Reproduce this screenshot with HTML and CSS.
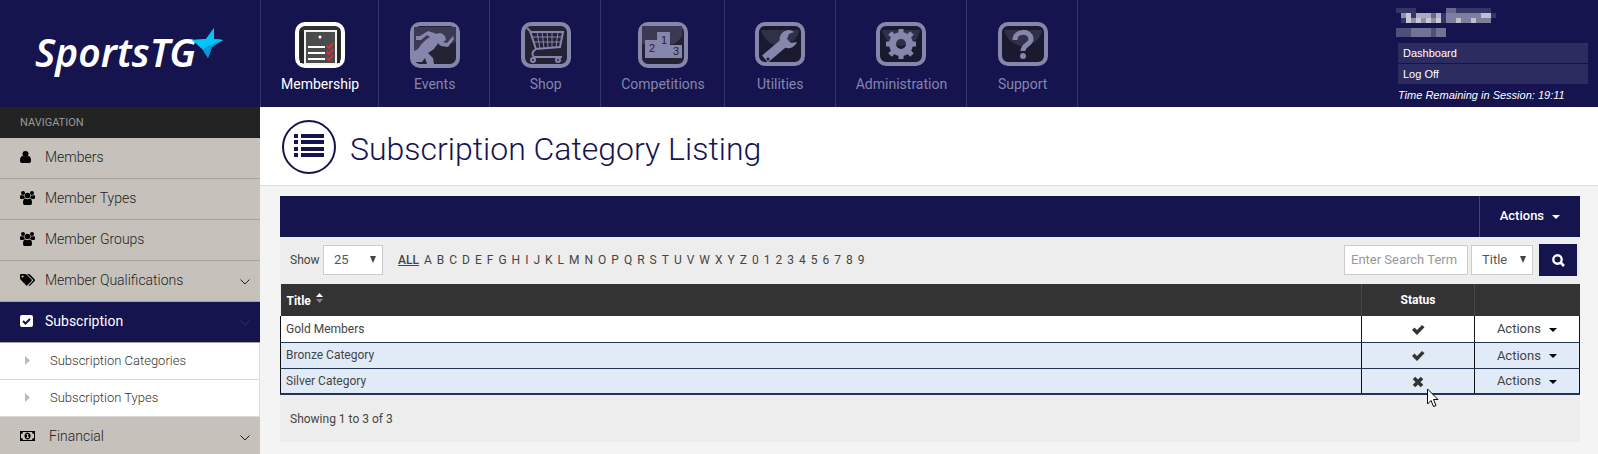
FILE: index.html
```
<!DOCTYPE html>
<html lang="en">
<head>
  <meta charset="UTF-8">
  <meta name="viewport" content="width=device-width, initial-scale=1.0">
  <title>Subscription Category Listing</title>
  <link rel="stylesheet" href="styles.css">
</head>

<body>
  <!-- shared icons -->
  <svg class="sprite" width="0" height="0">
    <symbol id="users" viewBox="0 0 15 14">
      <circle cx="3" cy="2" r="2"/><circle cx="12" cy="2" r="2"/><circle cx="7.500" cy="4.500" r="2.800"/>
      <path d="M0 7V5.500Q0 4 1.200 4Q3 5 4 4.300Q4 6 5 7Q4 7 3.300 8H1Q0 8 0 7ZM15 7V5.500Q15 4 13.800 4Q12 5 11 4.300Q11 6 10 7Q11 7 11.700 8H14Q15 8 15 7ZM3 12Q3 7.500 5.200 7.500Q7.500 9 9.800 7.500Q12 7.500 12 12Q12 14 10.500 14H4.500Q3 14 3 12Z"/>
    </symbol>
    <symbol id="chevron" viewBox="0 0 10 6">
      <path d="M0.500 0.500L5 5L9.500 0.500" fill="none" stroke="currentColor"/>
    </symbol>
    <symbol id="caret" viewBox="0 0 8 4"><path d="M0 0H8L4 4Z"/></symbol>
    <symbol id="tick" viewBox="0 0 14 12"><path d="M1 6L3.500 3.500L6 6L11 1L13.500 3.300L6 11Z"/></symbol>
    <symbol id="cross" viewBox="0 0 12 12">
      <path d="M2 2L10 10M10 2L2 10" stroke="currentColor" stroke-width="3.600"/>
    </symbol>
    <symbol id="frame" viewBox="0 0 50 46">
      <rect x="2" y="2" width="46" height="42" rx="8" fill="#242235" stroke="currentColor" stroke-width="4"/>
    </symbol>
  </svg>

  <header class="header">
    <a class="logo" href="#">
      <span>SportsTG</span>
      <svg class="star" width="31" height="31" viewBox="0 0 31 31">
        <path d="M0 12L14 11L22 0L22 11L31 12L20 19L16 30L11 22Z" fill="#00b9f2"/>
        <path d="M11 22L22 11L31 12L20 19L16 30Z" fill="#0099d6"/>
        <path d="M0 12L14 11L22 0L22 11L31 12L19 17L10 20Z" fill="#00c5f7"/>
      </svg>
    </a>
    <nav class="main-nav">
      <a class="active" href="#">
        <svg width="50" height="46" viewBox="0 0 50 46">
          <rect x="2" y="2" width="46" height="42" rx="8" fill="#333" stroke="#fff" stroke-width="4"/>
          <path d="M10 9H41V42H10Z" fill="#4b4b4b" stroke="#f2f2f2" stroke-width="2"/>
          <path d="M5 6L9 10V41H5ZM45 6L42 10V41H45Z" fill="#262626"/>
          <circle cx="25" cy="15" r="1.500" fill="#fff"/>
          <path d="M13 25H30M13 31H30M13 37H30" stroke="#fff" stroke-width="2"/>
          <path d="M32 24L34 26L38 21M32 30L34 32L38 27M32 36L34 38L38 33" stroke="#d6303f" stroke-width="2" fill="none"/>
        </svg>
        <span>Membership</span>
      </a>
      <a href="#">
        <svg width="50" height="46" viewBox="0 0 50 46">
          <use href="#frame"/>
          <path d="M4 5H46V20Q34 25 20 23L4 30Z" fill="#3b3954"/>
          <path d="M4 29L8 27Q13 19 20 15L17 13L11 18H6V14H10L18 9L27 12Q31 9 35 14L36 18L33 20L37 21L43 14L44 17L38 25L31 24L28 21L24 27L18 31L23 36L24 42H17L15 36L12 40H4Z" fill="currentColor"/>
        </svg>
        <span>Events</span>
      </a>
      <a href="#">
        <svg width="50" height="46" viewBox="0 0 50 46">
          <use href="#frame"/>
          <g fill="none" stroke="currentColor">
            <path d="M6 6L9 9L15 27L39 25L42 10H9" stroke-width="2"/>
            <path d="M15 27Q9 31 13 35H41" stroke-width="2"/>
            <path d="M11 15H41M13 20H40M16 10L19 27M21 10L23 26M26 10L27 26M31 10V26M37 10L35 25"/>
            <circle cx="12" cy="38" r="2" stroke-width="2"/>
            <circle cx="37" cy="38" r="2" stroke-width="2"/>
          </g>
        </svg>
        <span>Shop</span>
      </a>
      <a href="#">
        <svg width="50" height="46" viewBox="0 0 50 46">
          <use href="#frame"/>
          <path d="M4 4H44V14Q40 20 36 22H4Z" fill="#3b3954"/>
          <path d="M7 18H19V10H32V23H44V36H7Z" fill="currentColor"/>
          <g class="podium"><text x="11" y="30">2</text><text x="23" y="22">1</text><text x="35" y="33">3</text></g>
        </svg>
        <span>Competitions</span>
      </a>
      <a href="#">
        <svg width="50" height="44" viewBox="0 0 50 44">
          <rect x="2" y="2" width="46" height="40" rx="8" fill="#19192f" stroke="currentColor" stroke-width="4"/>
          <path d="M6 8H44Q42 22 24 24Q10 22 6 8Z" fill="#303048"/>
          <path d="M10 37L30 20" stroke="currentColor" stroke-width="9"/>
          <path d="M39 10A9 9 0 1 0 42 20L36 21L32 17L34 12Z" fill="currentColor"/>
          <circle cx="13" cy="37" r="1.500" fill="#19192f"/>
        </svg>
        <span>Utilities</span>
      </a>
      <a href="#">
        <svg width="50" height="44" viewBox="0 0 50 44">
          <rect x="2" y="2" width="46" height="40" rx="8" fill="#19192f" stroke="currentColor" stroke-width="4"/>
          <path d="M6 8H44Q42 22 24 24Q10 22 6 8Z" fill="#303048"/>
          <circle cx="25" cy="22" r="8.500" fill="none" stroke="currentColor" stroke-width="7"/>
          <path d="M25 7V12M25 32V37M10 22H15M35 22H40M14 11L18 15M32 29L36 33M36 11L32 15M18 29L14 33" stroke="currentColor" stroke-width="5"/>
        </svg>
        <span>Administration</span>
      </a>
      <a href="#">
        <svg width="50" height="44" viewBox="0 0 50 44">
          <rect x="2" y="2" width="46" height="40" rx="8" fill="#19192f" stroke="currentColor" stroke-width="4"/>
          <path d="M6 8H44Q42 22 24 24Q10 22 6 8Z" fill="#303048"/>
          <path d="M17 18C17 8 33 8 33 17C33 23 25 22 25 29" fill="none" stroke="currentColor" stroke-width="5"/>
          <circle cx="25" cy="34" r="3" fill="currentColor"/>
        </svg>
        <span>Support</span>
      </a>
    </nav>
    <div class="user">
      <svg class="user-name" width="100" height="30" viewBox="0 0 100 30" fill="#fff" shape-rendering="crispEdges">
        <path opacity=".14" d="M0 0H20V5H0ZM50 0H95V5H50ZM5 5H50V15H5ZM95 5H100V10H95Z"/>
        <path opacity=".25" d="M0 20H50V29H0ZM50 0H60V5H50ZM20 5H45V10H20Z"/>
        <path opacity=".2" d="M15 20H35V29H15ZM40 20H50V29H40Z"/>
        <path opacity=".45" d="M5 5H15V10H5ZM50 5H95V15H50ZM10 10H45V15H10ZM20 5H35V10H20Z"/>
        <path opacity=".5" d="M10 5H15V15H10ZM40 5H45V15H40ZM20 10H25V15H20ZM75 10H80V15H75ZM30 10H35V15H30ZM60 10H65V15H60ZM85 5H95V10H85Z"/>
      </svg>
      <a href="#">Dashboard</a>
      <a href="#">Log Off</a>
      <p>Time Remaining in Session: 19:11</p>
    </div>
  </header>

  <div class="wrapper">
    <aside class="sidebar">
      <h2>NAVIGATION</h2>
      <ul class="menu">
        <li><a href="#">
          <svg width="11" height="12" viewBox="0 0 11 12"><circle cx="5.500" cy="3" r="3"/><path d="M0 10Q0 5 3 5Q5.500 7 8 5Q11 5 11 10Q11 12 9 12H2Q0 12 0 10Z"/></svg>
          <span>Members</span>
        </a></li>
        <li><a href="#"><svg width="15" height="14"><use href="#users"/></svg><span>Member Types</span></a></li>
        <li><a href="#"><svg width="15" height="14"><use href="#users"/></svg><span>Member Groups</span></a></li>
        <li><a href="#">
          <svg width="15" height="12" viewBox="0 0 15 12"><path fill-rule="evenodd" d="M0 1Q0 0 1 0H5Q6 0 7 1L11.500 5.500Q12.300 6.300 11.500 7L7.500 11.300Q6.700 12 6 11.300L1 6Q0 5.500 0 4ZM2.500 1.500A1 1 0 1 0 2.600 1.500ZM7 0H8.500Q9.500 0 10 0.500L14.600 5.200Q15.300 6.200 14.600 7L10 11.700Q9.300 12.200 8.700 11.500L13 6.800Q13.500 6.300 13 5.700Z"/></svg>
          <span>Member Qualifications</span>
          <svg class="chevron" width="10" height="6"><use href="#chevron"/></svg>
        </a></li>
        <li class="active"><a href="#">
          <svg width="13" height="12" viewBox="0 0 13 12"><rect width="13" height="12" rx="2"/><path d="M3 6L5.500 8.500L10 4" stroke="#15144f" stroke-width="2" fill="none"/></svg>
          <span>Subscription</span>
          <svg class="chevron" width="10" height="6"><use href="#chevron"/></svg>
        </a>
          <ul class="submenu">
            <li><a href="#"><svg width="5" height="9" viewBox="0 0 5 9"><path d="M0 0L5 4.500L0 9Z"/></svg>Subscription Categories</a></li>
            <li><a href="#"><svg width="5" height="9" viewBox="0 0 5 9"><path d="M0 0L5 4.500L0 9Z"/></svg>Subscription Types</a></li>
          </ul>
        </li>
        <li class="wide"><a href="#">
          <svg width="15" height="10" viewBox="0 0 15 10"><path fill-rule="evenodd" d="M0 0H15V10H0ZM3 1Q3 3 1 3V7Q3 7 3 9H12Q12 7 14 7V3Q12 3 12 1Z"/><path fill-rule="evenodd" d="M7.500 1.500A3 3.500 0 1 0 7.600 1.500ZM6.500 3H8.200V6H9V7H6.500V6H7V4H6.500Z"/></svg>
          <span>Financial</span>
          <svg class="chevron" width="10" height="6"><use href="#chevron"/></svg>
        </a></li>
      </ul>
    </aside>

    <main class="content">
      <div class="page-title">
        <svg width="56" height="56" viewBox="0 0 56 56">
          <circle cx="28" cy="28" r="26" fill="none" stroke="#15144f" stroke-width="2"/>
          <path d="M13 17H17M20 17H43M13 23H17M20 23H43M13 30H17M20 30H43M13 36H17M20 36H43" stroke="#15144f" stroke-width="4"/>
        </svg>
        <h1>Subscription Category Listing</h1>
      </div>

      <section class="panel">
        <div class="toolbar">
          <button type="button">Actions <svg width="8" height="4"><use href="#caret"/></svg></button>
        </div>
        <form class="filters">
          <label for="show">Show</label>
          <select id="show" class="show"><option>25</option><option>50</option></select>
          <div class="letters">
            <a class="all" href="#">ALL</a>
            <a href="#">A</a> <a href="#">B</a> <a href="#">C</a> <a href="#">D</a> <a href="#">E</a> <a href="#">F</a>
            <a href="#">G</a> <a href="#">H</a> <a href="#">I</a> <a href="#">J</a> <a href="#">K</a> <a href="#">L</a>
            <a href="#">M</a> <a href="#">N</a> <a href="#">O</a> <a href="#">P</a> <a href="#">Q</a> <a href="#">R</a>
            <a href="#">S</a> <a href="#">T</a> <a href="#">U</a> <a href="#">V</a> <a href="#">W</a> <a href="#">X</a>
            <a href="#">Y</a> <a href="#">Z</a> <a href="#">0</a> <a href="#">1</a> <a href="#">2</a> <a href="#">3</a>
            <a href="#">4</a> <a href="#">5</a> <a href="#">6</a> <a href="#">7</a> <a href="#">8</a> <a href="#">9</a>
          </div>
          <input type="text" placeholder="Enter Search Term" aria-label="Search term">
          <select class="field" aria-label="Search field"><option>Title</option></select>
          <button class="search-btn" type="button" aria-label="Search">
            <svg width="13" height="13" viewBox="0 0 13 13"><circle cx="5.500" cy="5.500" r="4.200" fill="none" stroke="#fff" stroke-width="2.400"/><path d="M8.500 8.500L12 12" stroke="#fff" stroke-width="2.600"/></svg>
          </button>
        </form>
        <table class="listing">
          <thead>
            <tr>
              <th>Title <svg width="7" height="10" viewBox="0 0 7 10"><path d="M0 4L3.500 0L7 4Z" fill="#fff"/><path d="M0 6H7L3.500 10Z" fill="#888"/></svg></th>
              <th class="status">Status</th>
              <th class="actions"></th>
            </tr>
          </thead>
          <tbody>
            <tr>
              <td>Gold Members</td>
              <td class="status"><svg width="14" height="12"><use href="#tick"/></svg></td>
              <td class="actions"><button type="button">Actions <svg width="8" height="4"><use href="#caret"/></svg></button></td>
            </tr>
            <tr>
              <td>Bronze Category</td>
              <td class="status"><svg width="14" height="12"><use href="#tick"/></svg></td>
              <td class="actions"><button type="button">Actions <svg width="8" height="4"><use href="#caret"/></svg></button></td>
            </tr>
            <tr>
              <td>Silver Category</td>
              <td class="status">
                <svg width="12" height="12"><use href="#cross"/></svg>
                <svg class="pointer" width="12" height="20" viewBox="0 0 12 20"><path d="M0.500 1V16L4 12.500L6.500 18.500L9 17.500L6.500 11.500H11Z" fill="#fff" stroke="#000"/></svg>
              </td>
              <td class="actions"><button type="button">Actions <svg width="8" height="4"><use href="#caret"/></svg></button></td>
            </tr>
          </tbody>
        </table>
        <p class="showing">Showing 1 to 3 of 3</p>
      </section>
    </main>
  </div>
</body>
</html>
```
FILE: styles.css
```
* {
  margin: 0;
  padding: 0;
  box-sizing: border-box;
}

body {
  min-height: 100vh;
  display: flex;
  flex-direction: column;
  overflow: hidden;
  background: #f4f4f4;
  color: #444;
  font-family: Roboto, "Liberation Sans", sans-serif;
  font-size: 12px;
}

a {
  color: inherit;
  text-decoration: none;
}

ul {
  list-style: none;
}

button {
  border: none;
  background: none;
  color: inherit;
  font: inherit;
  cursor: pointer;
}

.sprite {
  position: absolute;
}

/* header */
.header {
  display: flex;
  background: #15144f;
  color: #fff;
}

.logo {
  position: relative;
  width: 260px;
  padding: 27px 0 0 35px;
  font-family: "Noto Sans", sans-serif;
  font-size: 39px;
  font-weight: 600;
  font-style: italic;
  line-height: 50px;
}

.star {
  position: absolute;
  top: 28px;
  left: 192px;
}

.main-nav {
  display: flex;
  border-left: 1px solid #36356d;
}

.main-nav a {
  display: flex;
  flex-direction: column;
  align-items: center;
  min-width: 111px;
  height: 107px;
  padding: 22px 19px 0 20px;
  border-right: 1px solid #36356d;
  color: #8685ab;
  font-size: 14px;
}

.main-nav a.active {
  color: #fff;
}

.main-nav span {
  margin-top: auto;
  padding-bottom: 13px;
  line-height: 20px;
}

.podium {
  font: 11px "Liberation Sans", sans-serif;
  fill: #242235;
}

.user {
  width: 190px;
  margin-left: auto;
  margin-right: 10px;
  padding-top: 8px;
  font-family: "Liberation Sans", sans-serif;
  font-size: 11px;
}

.user-name {
  display: block;
  margin: 0 0 5px -2px;
}

.user a {
  display: block;
  margin-bottom: 1px;
  padding: 0 5px;
  background: #2d2c61;
  line-height: 20px;
}

.user p {
  font-style: italic;
  line-height: 21px;
}

/* sidebar */
.wrapper {
  flex: 1;
  display: flex;
}

.sidebar {
  width: 260px;
  background: #c6c2bb;
}

.sidebar h2 {
  padding: 0 20px;
  background: #232323;
  color: #999;
  font-size: 11px;
  font-weight: 400;
  line-height: 31px;
}

.menu a {
  display: grid;
  grid-template-columns: 25px 1fr auto;
  align-items: center;
  height: 41px;
  padding: 0 10px 2px 20px;
  border-bottom: 1px solid #a5a29d;
  color: #222;
  font-size: 14px;
  font-weight: 300;
}

.menu .wide a {
  grid-template-columns: 29px 1fr auto;
}

.menu svg {
  fill: #000;
}

.menu .chevron {
  margin-top: 4px;
}

.menu > .active > a {
  background: #15144f;
  color: #fff;
  font-weight: 400;
}

.menu > .active > a svg {
  fill: #fff;
}

.menu > .active .chevron {
  color: #34335a;
}

.menu .submenu {
  background: #fff;
  border-right: 1px solid #ddd;
}

.menu .submenu a {
  height: 37px;
  padding-left: 25px;
  border-bottom-color: #d8d8d8;
  color: #333;
  font-size: 13px;
}

.menu .submenu svg {
  fill: #bbb;
}

/* content */
.content {
  flex: 1;
}

.page-title {
  display: flex;
  align-items: center;
  gap: 13px;
  height: 79px;
  padding: 2px 21px 0;
  background: #fff;
  border-bottom: 1px solid #ddd;
}

.page-title h1 {
  padding-top: 3px;
  color: #15144f;
  font-size: 32px;
  font-weight: 300;
}

.panel {
  margin: 10px 18px 0 20px;
  background: #ededed;
}

.toolbar {
  display: flex;
  justify-content: flex-end;
  height: 41px;
  background: #15144f;
  color: #fff;
}

.toolbar button {
  width: 101px;
  padding-bottom: 2px;
  border-left: 1px solid #45447a;
  font-size: 13px;
  font-weight: 500;
}

.panel button svg {
  margin-left: 5px;
  vertical-align: middle;
  fill: currentColor;
}

.filters {
  display: flex;
  align-items: center;
  height: 47px;
  padding: 0 3px 2px 10px;
}

.filters label {
  width: 33px;
}

.filters select,
.filters input {
  height: 30px;
  border: 1px solid #ccc;
  background: #fff;
  color: #555;
  font-family: inherit;
  font-size: 13px;
}

.filters select {
  appearance: none;
  padding: 0 10px;
  background: #fff url("data:image/svg+xml,%3Csvg xmlns='http://www.w3.org/2000/svg' width='6' height='7'%3E%3Cpath d='M0 0H6L3 7Z' fill='%23444'/%3E%3C/svg%3E") no-repeat right 6px center;
}

.filters .show {
  width: 60px;
}

.filters .field {
  width: 62px;
  margin: 0 6px 0 3px;
}

.filters input {
  width: 124px;
  padding: 0 6px;
}

.filters input::placeholder {
  color: #999;
}

.letters {
  display: flex;
  flex: 1;
  gap: 5px;
  padding-left: 15px;
}

.all {
  font-weight: 500;
  text-decoration: underline;
}

.filters .search-btn {
  width: 38px;
  height: 32px;
  background: #15144f;
}

.filters .search-btn svg {
  margin: 0;
}

/* table */
.listing {
  width: 100%;
  table-layout: fixed;
  border-collapse: collapse;
}

.listing th {
  height: 32px;
  padding: 0 6px;
  background: #333;
  border-right: 1px solid #484848;
  color: #fff;
  font-weight: 700;
  text-align: left;
}

.listing th:last-child {
  border-right-color: #333;
}

.listing th svg {
  margin: 0 0 2px 2px;
}

.listing td {
  height: 26px;
  padding: 0 5px;
  background: #fff;
  border: 1px solid #111;
  border-top: none;
  border-bottom-color: #233450;
}

.listing tr + tr td {
  background: #e1ebf8;
}

.listing tr:last-child td {
  border-bottom: 2px solid #233450;
}

.listing .status {
  position: relative;
  width: 113px;
  text-align: center;
}

.listing .status svg {
  color: #333;
  fill: #333;
  vertical-align: middle;
}

.listing .actions {
  width: 105px;
  padding: 0;
  text-align: center;
}

.listing .actions button {
  font-size: 13px;
}

.listing .actions button svg {
  fill: #000;
}

.listing .status .pointer {
  position: absolute;
  top: 19px;
  left: 65px;
}

.showing {
  padding: 2px 10px 0;
  line-height: 45px;
}
```
